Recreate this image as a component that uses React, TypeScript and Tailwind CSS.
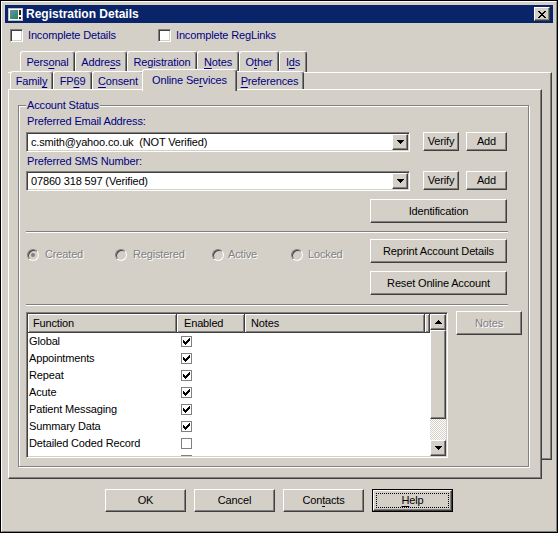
import React from "react";

const raised =
  "border border-t-white border-l-white border-r-[#404040] border-b-[#404040] shadow-[inset_-1px_-1px_0_#808080] bg-[#d4d0c8]";
const sunken =
  "border border-t-[#808080] border-l-[#808080] border-r-white border-b-white shadow-[inset_1px_1px_0_#404040,inset_-1px_-1px_0_#d4d0c8]";
const disabledText = "text-[#808080] [text-shadow:1px_1px_0_#fff]";

const U = ({ c }: { c: string }) => <span className="underline underline-offset-[2px]">{c}</span>;

function Btn({
  children,
  className = "",
  disabled = false,
}: {
  children: React.ReactNode;
  className?: string;
  disabled?: boolean;
}) {
  return (
    <div
      className={`${raised} flex items-center justify-center leading-none ${
        disabled ? disabledText : "text-black"
      } ${className}`}
    >
      {children}
    </div>
  );
}

function DownArrow() {
  return (
    <svg width="7" height="4" viewBox="0 0 7 4" shapeRendering="crispEdges">
      <path d="M0 0h7v1h-7z M1 1h5v1h-5z M2 2h3v1h-3z M3 3h1v1h-1z" fill="#000" />
    </svg>
  );
}

function UpArrow() {
  return (
    <svg width="7" height="4" viewBox="0 0 7 4" shapeRendering="crispEdges">
      <path d="M3 0h1v1h-1z M2 1h3v1h-3z M1 2h5v1h-5z M0 3h7v1h-7z" fill="#000" />
    </svg>
  );
}

function XGlyph() {
  return (
    <svg width="8" height="7" viewBox="0 0 8 7" shapeRendering="crispEdges">
      <path
        d="M0 0h2v1h-2z M6 0h2v1h-2z M1 1h2v1h-2z M5 1h2v1h-2z M2 2h4v1h-4z M3 3h2v1h-2z M2 4h4v1h-4z M1 5h2v1h-2z M5 5h2v1h-2z M0 6h2v1h-2z M6 6h2v1h-2z"
        fill="#000"
      />
    </svg>
  );
}

function CheckMark() {
  return (
    <svg width="7" height="7" viewBox="0 0 7 7" shapeRendering="crispEdges">
      <path
        d="M6 0h1v1h-1z M5 1h2v1h-2z M0 2h1v1h-1z M4 2h3v1h-3z M0 3h2v1h-2z M3 3h3v1h-3z M0 4h5v1h-5z M1 5h3v1h-3z M2 6h1v1h-1z"
        fill="#000"
      />
    </svg>
  );
}

function AppIcon() {
  return (
    <svg width="15" height="13" viewBox="0 0 15 13" shapeRendering="crispEdges">
      <defs>
        <linearGradient id="ig" x1="0" y1="0" x2="1" y2="1">
          <stop offset="0" stopColor="#6f8fb0" />
          <stop offset="1" stopColor="#1f8a5a" />
        </linearGradient>
      </defs>
      <rect x="0" y="0" width="15" height="13" fill="#c0c0c0" />
      <rect x="1" y="1" width="13" height="11" fill="#ffffff" />
      <rect x="2" y="2" width="8" height="9" fill="url(#ig)" />
      <rect x="11" y="2" width="2" height="5" fill="#202020" />
      <rect x="11" y="9" width="2" height="2" fill="#202020" />
    </svg>
  );
}

function BigCheck() {
  return <div className={`w-[13px] h-[13px] shrink-0 bg-white ${sunken}`} />;
}

function SmallCheck({ checked }: { checked: boolean }) {
  return (
    <div className="w-[11px] h-[11px] border border-[#808080] bg-white flex items-center justify-center">
      {checked && <CheckMark />}
    </div>
  );
}

function Radio({ checked = false }: { checked?: boolean }) {
  return (
    <div className="w-[12px] h-[12px] shrink-0 rounded-full border border-t-[#808080] border-l-[#808080] border-r-white border-b-white shadow-[inset_1px_1px_0_#404040] bg-[#d4d0c8] flex items-center justify-center">
      {checked && <div className="w-[4px] h-[4px] rounded-full bg-[#808080]" />}
    </div>
  );
}

function Combo({ text }: { text: string }) {
  return (
    <div className={`w-[384px] h-[20px] bg-white ${sunken} flex items-center p-[1px]`}>
      <span className="flex-1 pl-[3px] leading-none whitespace-pre">{text}</span>
      <div className={`w-[16px] h-[16px] ${raised} flex items-center justify-center`}>
        <DownArrow />
      </div>
    </div>
  );
}

const tabBase =
  "flex items-center justify-center border-l border-t border-r border-l-white border-t-white border-r-[#404040] rounded-t-[3px] shadow-[inset_-1px_0_0_#808080] bg-[#d4d0c8] text-[#000080] leading-none";

const row1 = [
  { w: "w-[55px]", label: <>Pers<U c="o" />nal</> },
  { w: "w-[52px]", label: <>Addre<U c="s" />s</> },
  { w: "w-[70px]", label: <>Registration</> },
  { w: "w-[42px]", label: <><U c="N" />otes</> },
  { w: "w-[40px]", label: <>O<U c="t" />her</> },
  { w: "w-[28px]", label: <>I<U c="d" />s</> },
];

const rows: [string, boolean][] = [
  ["Global", true],
  ["Appointments", true],
  ["Repeat", true],
  ["Acute", true],
  ["Patient Messaging", true],
  ["Summary Data", true],
  ["Detailed Coded Record", false],
  ["Pharmacy Nomination Lists", false],
];

const headerCell =
  "h-full flex items-center border-r border-b border-r-[#404040] border-b-[#404040] shadow-[inset_1px_1px_0_#fff,inset_-1px_-1px_0_#808080] bg-[#d4d0c8] leading-none";

export default function App() {
  return (
    <div className="w-[558px] h-[533px] border border-black bg-[#d4d0c8] text-[11px] tracking-[-0.15px] [font-family:'Liberation_Sans',Arial,sans-serif] text-black select-none overflow-hidden">
      <div className="h-full border border-t-white border-l-white border-r-[#808080] border-b-[#808080] p-[3px] flex flex-col">
        {/* Title bar */}
        <div className="h-[18px] shrink-0 bg-[#0a246a] flex items-center pl-[3px]">
          <AppIcon />
          <span className="ml-[3px] text-white font-bold text-[12px] tracking-normal leading-none">
            Registration Details
          </span>
          <div className={`ml-auto mr-[3px] w-[16px] h-[14px] ${raised} flex items-center justify-center`}>
            <XGlyph />
          </div>
        </div>

        {/* Check boxes */}
        <div className="mt-[6px] h-[13px] ml-[5px] flex items-center text-[#000080] leading-none">
          <div className="w-[148px] flex items-center">
            <BigCheck />
            <span className="ml-[5px]">Incomplete Details</span>
          </div>
          <div className="flex items-center">
            <BigCheck />
            <span className="ml-[5px]">Incomplete RegLinks</span>
          </div>
        </div>

        {/* Tab control */}
        <div className="mt-[9px] ml-[3px] grid w-[544px] h-[428px]">
          {/* back row */}
          <div className="col-start-1 row-start-1 flex flex-col">
            <div className="ml-[12px] flex h-[21px]">
              {row1.map((t, i) => (
                <div key={i} className={`${tabBase} ${t.w} h-[21px]`}>
                  {t.label}
                </div>
              ))}
            </div>
            <div className="w-[544px] h-[388px] border-t border-r border-b border-t-white border-r-[#404040] border-b-[#404040] shadow-[inset_-1px_-1px_0_#808080]" />
          </div>

          {/* front row */}
          <div className="col-start-1 row-start-1 flex flex-col pt-[18px]">
            <div className="pl-[2px] flex items-end h-[20px]">
              <div className={`${tabBase} w-[43px] h-[18px] pt-[2px]`}>
                Famil<U c="y" />
              </div>
              <div className={`${tabBase} w-[39px] h-[18px] pt-[2px]`}>
                FP<U c="6" />9
              </div>
              <div className={`${tabBase} w-[52px] h-[18px] pt-[2px]`}>
                <U c="C" />onsent
              </div>
              <div className={`${tabBase} relative z-10 -mx-[2px] -mb-[2px] w-[95px] h-[22px] pb-[1px]`}>
                Online Se<U c="r" />vices
              </div>
              <div className={`${tabBase} w-[69px] h-[18px] pt-[2px]`}>
                <U c="P" />references
              </div>
            </div>

            <div className="w-[534px] h-[390px] border border-t-white border-l-white border-r-[#404040] border-b-[#404040] shadow-[inset_-1px_-1px_0_#808080] bg-[#d4d0c8] pl-[9px] pt-[15px]">
              {/* Group box */}
              <div className="w-[511px] h-[362px] border border-[#808080] shadow-[inset_1px_1px_0_#fff,1px_1px_0_#fff] pl-[7px] flex flex-col">
                <div className="-mt-[7px] w-fit h-[13px] px-[1px] leading-[13px] bg-[#d4d0c8] text-[#000080]">
                  Account Status
                </div>
                <div className="mt-[3px] ml-[1px] h-[13px] leading-[13px] text-[#000080]">
                  Preferred Email Address:
                </div>
                <div className="mt-[4px] flex h-[20px]">
                  <Combo text="c.smith@yahoo.co.uk  (NOT Verified)" />
                  <Btn className="ml-[13px] w-[36px] h-[19px]">Verify</Btn>
                  <Btn className="ml-[7px] w-[41px] h-[19px]">Add</Btn>
                </div>
                <div className="mt-[3px] ml-[1px] h-[13px] leading-[13px] text-[#000080]">
                  Preferred SMS Number:
                </div>
                <div className="mt-[3px] flex h-[20px]">
                  <Combo text="07860 318 597 (Verified)" />
                  <Btn className="ml-[13px] w-[36px] h-[19px]">Verify</Btn>
                  <Btn className="ml-[7px] w-[41px] h-[19px]">Add</Btn>
                </div>
                <div className="mt-[8px] w-[481px] h-[24px] flex justify-end">
                  <Btn className="w-[137px] h-[24px]">Identification</Btn>
                </div>
                <div className="mt-[8px] w-[482px] h-[2px] border-t border-t-[#808080] border-b border-b-white" />

                <div className="w-[481px] h-[71px] flex">
                  <div className={`mt-[15px] ml-[1px] h-[13px] flex items-center leading-none ${disabledText}`}>
                    <div className="w-[88px] flex items-center">
                      <Radio checked />
                      <span className="ml-[6px]">Created</span>
                    </div>
                    <div className="w-[97px] flex items-center">
                      <Radio />
                      <span className="ml-[6px]">Registered</span>
                    </div>
                    <div className="w-[79px] flex items-center">
                      <Radio />
                      <span className="ml-[4px]">Active</span>
                    </div>
                    <div className="flex items-center">
                      <Radio />
                      <span className="ml-[5px]">Locked</span>
                    </div>
                  </div>
                  <div className="ml-auto pt-[6px] flex flex-col gap-[8px]">
                    <Btn className="w-[137px] h-[24px]">Reprint Account Details</Btn>
                    <Btn className="w-[137px] h-[24px]">Reset Online Account</Btn>
                  </div>
                </div>

                <div className="w-[482px] h-[2px] border-t border-t-[#808080] border-b border-b-white" />

                <div className="mt-[6px] flex items-start">
                  <div className={`w-[422px] h-[146px] bg-white ${sunken} p-[1px] flex`}>
                    <div className="flex-1 flex flex-col overflow-hidden">
                      <div className="h-[19px] shrink-0 flex">
                        <div className={`${headerCell} w-[149px] pl-[5px]`}>Function</div>
                        <div className={`${headerCell} w-[68px] pl-[7px]`}>Enabled</div>
                        <div className={`${headerCell} w-[180px] pl-[6px]`}>Notes</div>
                        <div className={`${headerCell} flex-1`} />
                      </div>
                      {rows.map(([name, on]) => (
                        <div key={name} className="h-[17px] shrink-0 flex items-center leading-none">
                          <div className="w-[149px] pl-[1px] whitespace-nowrap">{name}</div>
                          <div className="w-[68px] pl-[4px]">
                            <SmallCheck checked={on} />
                          </div>
                        </div>
                      ))}
                    </div>
                    <div className="w-[16px] flex flex-col">
                      <div className={`${raised} h-[16px] shrink-0 flex items-center justify-center`}>
                        <UpArrow />
                      </div>
                      <div className={`${raised} h-[89px] shrink-0`} />
                      <div className="flex-1 bg-[repeating-conic-gradient(#d4d0c8_0_25%,#ffffff_0_50%)] bg-[length:2px_2px]" />
                      <div className={`${raised} h-[16px] shrink-0 flex items-center justify-center`}>
                        <DownArrow />
                      </div>
                    </div>
                  </div>
                  <Btn disabled className="ml-[8px] -mt-[1px] w-[66px] h-[24px]">
                    Notes
                  </Btn>
                </div>
              </div>
            </div>
          </div>
        </div>

        {/* Bottom buttons */}
        <div className="mt-[10px] ml-[100px] flex gap-[8px]">
          <Btn className="w-[81px] h-[23px]">OK</Btn>
          <Btn className="w-[81px] h-[23px]">Cancel</Btn>
          <Btn className="w-[81px] h-[23px]">
            Con<U c="t" />acts
          </Btn>
          <div className="w-[81px] h-[23px] border border-black flex">
            <div className={`${raised} flex-1 p-[2px] flex`}>
              <div className="flex-1 border border-dotted border-black flex items-center justify-center leading-none">
                <U c="H" />elp
              </div>
            </div>
          </div>
        </div>
      </div>
    </div>
  );
}
